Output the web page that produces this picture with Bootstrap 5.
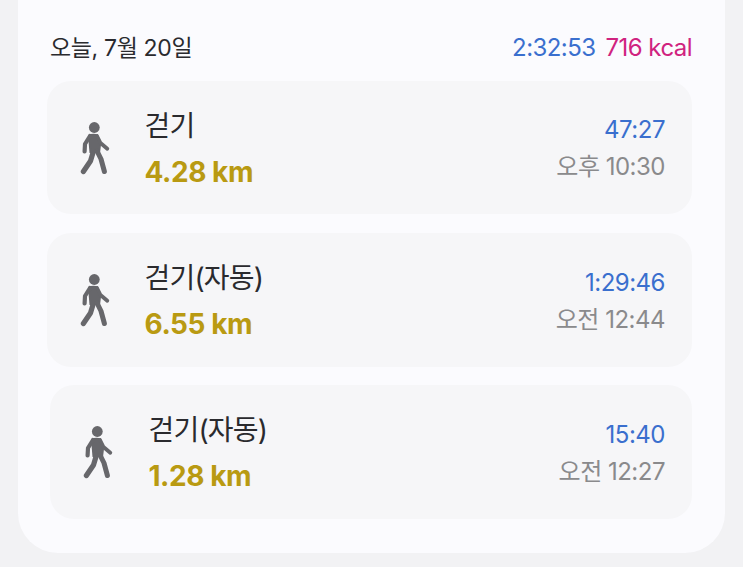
<!DOCTYPE html>
<html lang="ko">
<head>
<meta charset="utf-8">
<title>걷기</title>
<link href="https://cdn.jsdelivr.net/npm/bootstrap@5.3.0/dist/css/bootstrap.min.css" rel="stylesheet">
<style>
html,body{height:567px;overflow:hidden}
body{background:#f2f2f4;font-family:Inter,"Noto Sans CJK KR",sans-serif;color:#2a2a2e}
.panel{margin:0 18px 0 18px;height:553px;background:#fbfbfe;border-radius:0 0 40px 40px;padding:33px 33px 0 29px}
.head{height:30px;padding:0 0 0 3px;font-size:23px;margin-bottom:18px;letter-spacing:-.35px}
.totals{font-size:24px;letter-spacing:-.55px;column-gap:10px}
.dur{color:#3a6fce}
.cal{color:#d0237f}
.entry{height:133px;background:#f6f6f8;border-radius:24px;margin-bottom:19px;padding:0 27px 0 33px}
.entry.shift{margin-left:3px}
.entry.tall{height:134px;margin-bottom:18px}
.walker{width:30px;height:54px;flex:none;margin-right:34.5px;margin-top:0}
.shift .walker{margin-right:35.5px}
.name{font-size:28px;line-height:36px;letter-spacing:-.8px;margin-top:2px;margin-bottom:10px}
.dist{font-size:28px;line-height:36px;font-weight:700;color:#b99a12;letter-spacing:-.45px}
.meta{text-align:right;font-size:24px;line-height:36px;letter-spacing:-.5px;margin-top:2px}
.meta .dur{margin-bottom:1px}
.clock{color:#8a8a8c}
</style>
</head>
<body>
<svg width="0" height="0" class="d-block position-absolute" aria-hidden="true"><defs>
<symbol id="walk" viewBox="0 0 30 54">
<circle cx="14.3" cy="6.5" r="5.4" fill="#67676b"/>
<path d="M8 14 Q13 11.8 18 13.5 L21 24 L20 32 L9.5 32 Z" fill="#67676b"/>
<g fill="none" stroke="#67676b" stroke-linecap="round" stroke-linejoin="round">
<path d="M10 15 L5 23 L4.6 30.5" stroke-width="4.2"/>
<path d="M17 15 L20.5 22 L27.3 27.8" stroke-width="3.8"/>
<path d="M13.5 30 L10.5 40 L3.4 50.5" stroke-width="5.2"/>
<path d="M17 30 L21 38 L24.4 50.5" stroke-width="5"/>
</g>
</symbol>
</defs></svg>
<main class="panel">
<div class="head d-flex justify-content-between align-items-center">
<span>오늘, 7월 20일</span>
<span class="totals d-flex"><span class="dur">2:32:53</span><span class="cal">716 kcal</span></span>
</div>
<section class="entry d-flex align-items-center">
<svg class="walker"><use href="#walk"/></svg>
<div class="flex-grow-1"><div class="name">걷기</div><div class="dist">4.28 km</div></div>
<div class="meta"><div class="dur">47:27</div><div class="clock">오후 10:30</div></div>
</section>
<section class="entry tall d-flex align-items-center">
<svg class="walker"><use href="#walk"/></svg>
<div class="flex-grow-1"><div class="name">걷기(자동)</div><div class="dist">6.55 km</div></div>
<div class="meta"><div class="dur">1:29:46</div><div class="clock">오전 12:44</div></div>
</section>
<section class="entry tall shift d-flex align-items-center">
<svg class="walker"><use href="#walk"/></svg>
<div class="flex-grow-1"><div class="name">걷기(자동)</div><div class="dist">1.28 km</div></div>
<div class="meta"><div class="dur">15:40</div><div class="clock">오전 12:27</div></div>
</section>
</main>
</body>
</html>
